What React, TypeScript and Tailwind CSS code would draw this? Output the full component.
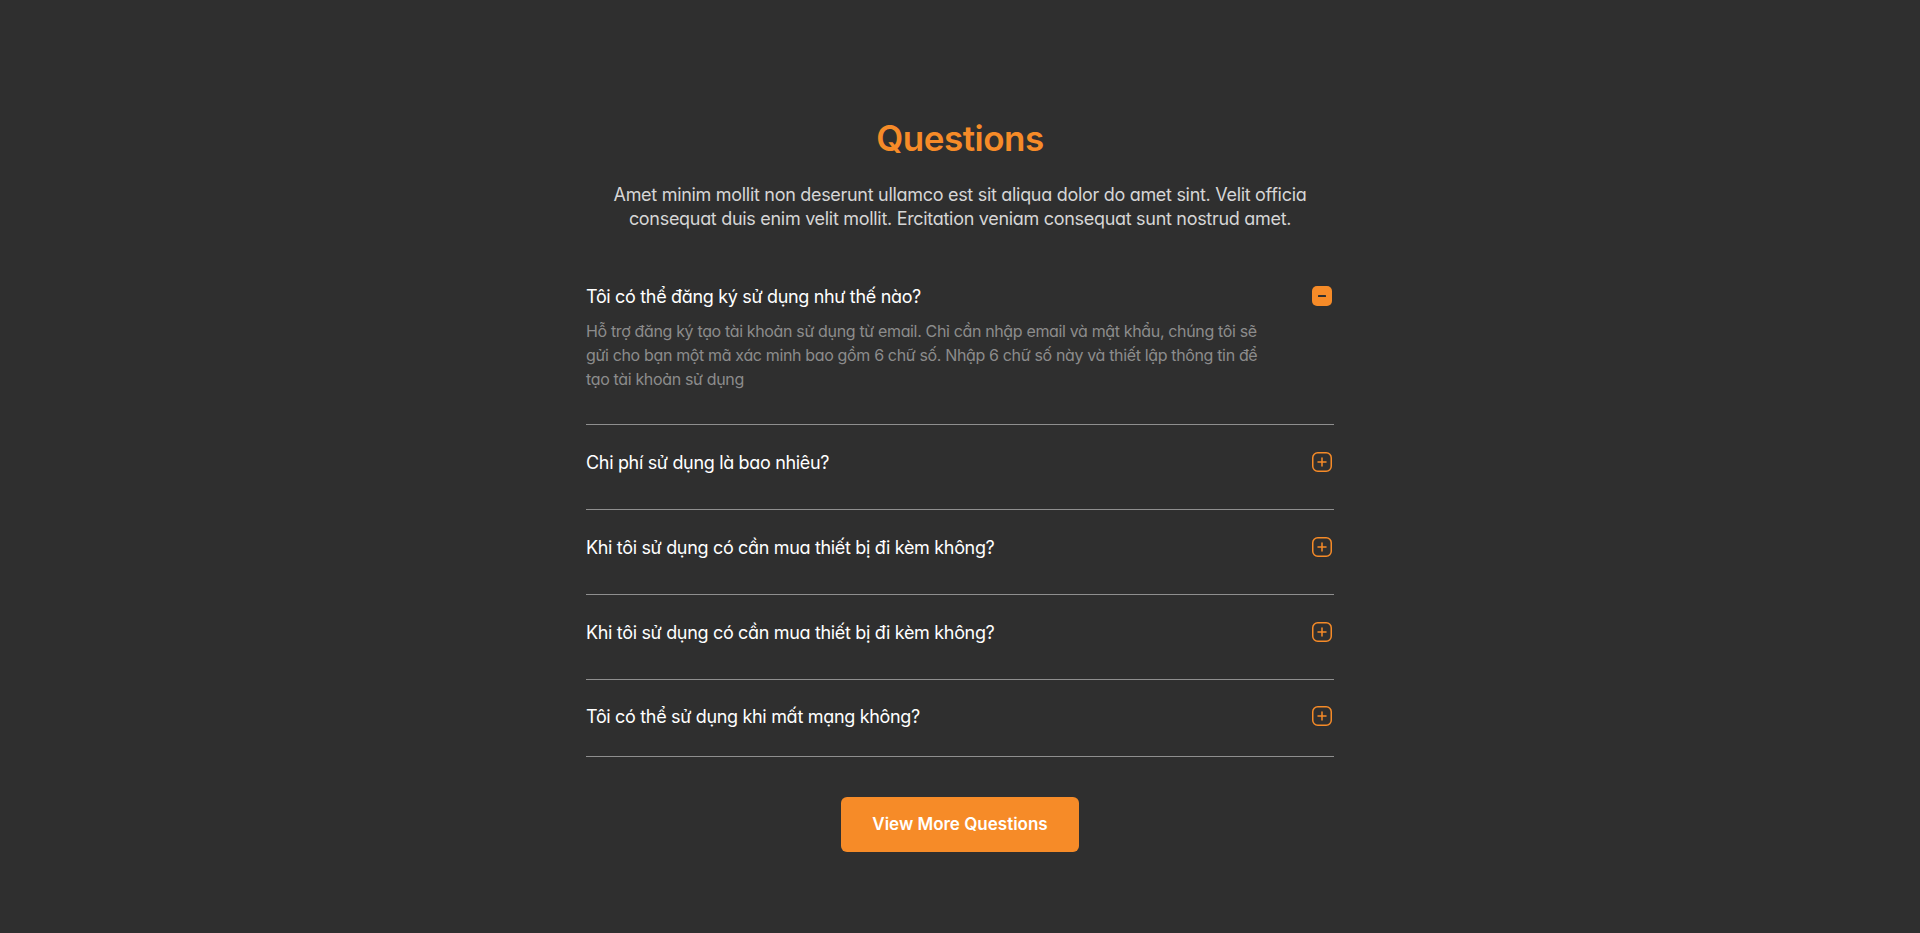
import React, { useState } from "react";

const faqs = [
  {
    q: "Tôi có thể đăng ký sử dụng như thế nào?",
    a: "Hỗ trợ đăng ký tạo tài khoản sử dụng từ email. Chỉ cần nhập email và mật khẩu, chúng tôi sẽ gửi cho bạn một mã xác minh bao gồm 6 chữ số. Nhập 6 chữ số này và thiết lập thông tin để tạo tài khoản sử dụng",
  },
  { q: "Chi phí sử dụng là bao nhiêu?", a: "" },
  { q: "Khi tôi sử dụng có cần mua thiết bị đi kèm không?", a: "" },
  { q: "Khi tôi sử dụng có cần mua thiết bị đi kèm không?", a: "" },
  { q: "Tôi có thể sử dụng khi mất mạng không?", a: "" },
];

function ToggleIcon({ open }: { open: boolean }) {
  if (open) {
    return (
      <svg width="20" height="20" viewBox="0 0 20 20" className="shrink-0">
        <rect x="0" y="0" width="20" height="20" rx="5" fill="#F68B28" />
        <rect x="6" y="9" width="8" height="2" rx="0.5" fill="#2f2f2f" />
      </svg>
    );
  }
  return (
    <svg width="20" height="20" viewBox="0 0 20 20" className="shrink-0">
      <rect x="0.75" y="0.75" width="18.5" height="18.5" rx="5" fill="none" stroke="#F68B28" strokeWidth="1.5" />
      <path d="M10 6v8M6 10h8" stroke="#F68B28" strokeWidth="1.5" strokeLinecap="round" />
    </svg>
  );
}

function App() {
  const [open, setOpen] = useState(0);

  return (
    <div className="min-h-screen bg-[#2f2f2f] font-['Inter',sans-serif] [font-feature-settings:'cv11']">
      <section className="mx-auto w-[748px] pt-[116px] flex flex-col items-center">
        <h2 className="text-[35px] leading-[44px] font-semibold text-[#F68B28] tracking-[-0.5px]">
          Questions
        </h2>
        <p className="mt-[23px] w-[720px] text-center text-[18px] leading-[24px] text-[#d6d6d6] tracking-[-0.3px]">
          Amet minim mollit non deserunt ullamco est sit aliqua dolor do amet sint. Velit officia consequat duis enim velit mollit. Ercitation veniam consequat sunt nostrud amet.
        </p>

        <div className="mt-[28px] w-full">
          {faqs.map((item, i) => {
            const isOpen = open === i;
            const last = i === faqs.length - 1;
            return (
              <div
                key={i}
                className={
                  "border-b border-[#8f8f8f] " +
                  (last ? "pt-[22px] pb-[26px]" : "pt-[23px] pb-[33px]")
                }
              >
                <button
                  type="button"
                  onClick={() => setOpen(isOpen ? -1 : i)}
                  className="w-full h-[28px] flex items-center justify-between text-left cursor-pointer"
                >
                  <span className="text-[18px] font-normal text-white tracking-[-0.33px]">
                    {item.q}
                  </span>
                  <span className="mr-[2px]">
                    <ToggleIcon open={isOpen} />
                  </span>
                </button>
                {isOpen && item.a && (
                  <p className="mt-[9px] w-[690px] text-[16px] leading-[24px] text-[#8c8c8c] tracking-[-0.35px]">
                    {item.a}
                  </p>
                )}
              </div>
            );
          })}
        </div>

        <button
          type="button"
          className="mt-[40px] w-[238px] h-[55px] rounded-[6px] bg-[#F68B28] text-white text-[17px] font-semibold cursor-pointer"
        >
          View More Questions
        </button>
      </section>
    </div>
  );
}

export default App;
